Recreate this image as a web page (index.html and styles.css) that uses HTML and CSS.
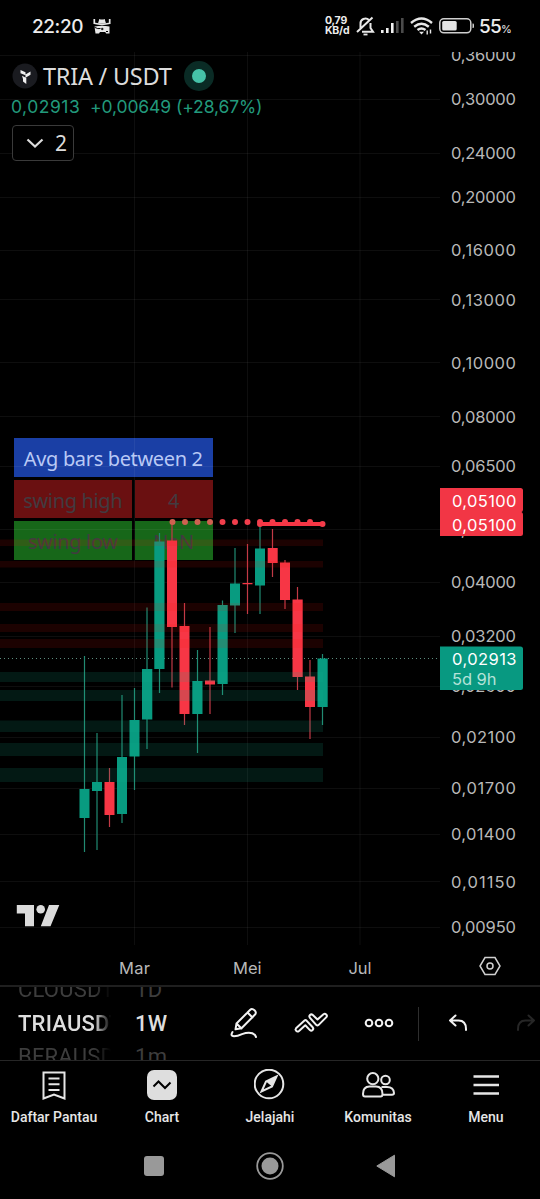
FILE: index.html
```html
<!DOCTYPE html>
<html lang="id">
<head>
    <meta charset="UTF-8">
    <title>TRIA / USDT</title>
    <link rel="stylesheet" href="styles.css">
</head>
<body>
    <header class="status">
        <span class="clock">22:20</span>
        <svg class="agent" width="18" height="17" viewBox="0 0 18 17">
            <path d="M5 5.500L6.300 1q2.700 1.200 5.400 0L13 5.500z" fill="#e8e8e8"/>
            <path d="M1.300 1v4.300q7.700 2 15.400 0V1" fill="none" stroke="#e8e8e8" stroke-width="1.700"/>
            <path d="M1.500 8.500q7.500-1.600 15 0v7h-3.300l-1-1.500H7l-1 1.500H2.500z" fill="#e8e8e8"/>
            <path d="M1.500 9.300q3.500 2 6 1.200M8 11h2.500M9.200 9.800v2.400M13 13.500h2" fill="none" stroke="#000" stroke-width="1"/>
        </svg>
        <span class="speed"><b>0,79</b><b>KB/d</b></span>
        <svg class="bell" width="19" height="20" viewBox="0 0 19 20" fill="none" stroke="#e8e8e8" stroke-width="2">
            <path d="M4.500 12V8a5 5 0 0 1 8.500-4M14.500 7v5l2.500 3.700H6M1 16L16.500 1.500"/>
            <path d="M7.500 18.500h4" stroke-width="1.800"/>
        </svg>
        <svg class="signal" width="23" height="16" viewBox="0 0 23 16">
            <path d="M0 12h2.600v3H0zM5 10h2.600v5H5zM10 5h2.600v10H10z" fill="#f0f0f0"/>
            <path d="M15 3h2.600v12H15zM20 0h2.600v15H20z" fill="#4b4b4b"/>
        </svg>
        <svg class="wifi" width="23" height="18" viewBox="0 0 23 18" fill="none" stroke="#e8e8e8" stroke-width="2.400">
            <path d="M1 6q10.500-9 21 0M4.200 9.700q7.300-6 14.600 0M7.500 13q4-3.200 8 0"/>
            <path d="M9 14.800h5L11.500 17.500z" fill="#e8e8e8" stroke="none"/>
            <path d="M17.200 13.500v4M20.500 12.500v4" stroke-width="1.400"/>
        </svg>
        <svg class="battery" width="36" height="16" viewBox="0 0 36 16">
            <rect x=".8" y=".8" width="31" height="14" rx="4" fill="none" stroke="#cfcfcf" stroke-width="1.500"/>
            <rect x="3.200" y="3" width="14.500" height="9.600" rx="1.500" fill="#e4e4e4"/>
            <path d="M33.500 5.500h.5q1 0 1 1v2.500q0 1-1 1h-.5z" fill="#cfcfcf"/>
        </svg>
        <span class="percent">55<small>%</small></span>
    </header>

    <main class="chart">
        <div class="legend">
            <div class="pair">
                <svg width="26" height="26" viewBox="0 0 26 26">
                    <circle cx="13" cy="13" r="12.500" fill="#1a1b20"/>
                    <path d="M8.500 7l5 2.300v3L8.500 10.200zM13.500 11.500l5-3v3.200l-5 3zM10 12.800l4.300 2.200v6L11 18.500v-2.500z" fill="#f1f1f1"/>
                </svg>
                <h1 class="symbol">TRIA / USDT</h1>
                <span class="market"></span>
            </div>
            <div class="quote"><span class="price">0,02913</span><span class="change">+0,00649 (+28,67%)</span></div>
            <button class="collapse">
                <svg width="18" height="11" viewBox="0 0 18 11"><path d="M1.500 1.500L9 8.500l7.500-7" fill="none" stroke="#dcdcdc" stroke-width="2.200"/></svg>
                <span>2</span>
            </button>
        </div>

        <div class="swing">
            <div class="avg">Avg bars between 2</div>
            <div class="high">swing high</div>
            <div class="high">4</div>
            <div class="low">swing low</div>
            <div class="low">NaN</div>
        </div>

        <svg class="plot" width="540" height="933" viewBox="0 52 540 933">
            <!-- grid -->
            <path class="grid" d="M0 55.500H440M0 99.500H440M0 153.500H440M0 197.500H440M0 250.500H440M0 299.500H440M0 362.500H440M0 416.500H440M0 466.500H440M0 529.500H440M0 582.500H440M0 636.500H440M0 686.500H440M0 737.500H440M0 788.500H440M0 834.500H440M0 881.500H440M0 927.500H440M134.500 52V945M247.500 52V945M360 52V945"/>

            <!-- price line -->
            <path class="last" d="M0 658.500H440"/>

            <!-- candles -->
            <path class="wick up" d="M84.500 656V852M97 733V850M122 695V823M134.500 688V790M147 607.500V749M159.500 533V693M197.500 650V753M222.500 600.500V695M235 548V633M260 524V614M322.500 654V725"/>
            <path class="wick down" d="M109.500 768V827M172 522V687.500M184.500 603V725M210 627V714M247.500 544V614M272.500 529V577M285 560V609M297.500 587V690M310 660V739"/>
            <path class="body-up" d="M79.500 789h10v29h-10zM92 782h10v9h-10zM117 757h10v57h-10zM129.500 720h10v36.500h-10zM142 669h10.300v50.500H142zM154.300 541.500h10.200V669h-10.200zM192.300 681h10.200v33h-10.200zM217.500 605h10.200v79h-10.200zM230 583.500h10v22h-10zM255 548.500h10v37h-10zM317.500 658.500h10.200V707h-10.200z"/>
            <path class="body-down" d="M104.500 782h10v33h-10zM167 540.500h10V627h-10zM179.500 626h10v88h-10zM205 680.500h10v4h-10zM242.500 583h10v1.200h-10zM267.700 548h10v15h-10zM280 562.500h10V600h-10zM292.500 599.500h10.200V677h-10.200zM305 676.500h10V707h-10z"/>

            <!-- zones -->
            <path class="supply" d="M0 539.500H323v6.500H0zM0 561H323v6.500H0zM0 603H323v8H0zM0 624H323v8H0zM0 639H323v9H0z"/>
            <path class="demand" d="M0 672H323v10H0zM0 690H323v11H0zM0 720.500H323V732H0zM0 743H323v13H0zM0 768H323v14H0z"/>

            <!-- swing high level -->
            <path class="dots muted" d="M172.500 522h0M185 522h0M197.500 522h0M210 522h0"/>
            <path class="dots" d="M222.500 522h0M235 522h0M247.500 522h0M260 522h0M272.500 522h0M285 522h0M297.500 522h0M310 522h0M260 524h0M322.500 524h0"/>
            <path class="level" d="M260 524H322.500"/>

            <!-- price scale -->
            <g class="scale">
                <text x="451" y="61" textLength="65">0,36000</text>
                <text x="451" y="105" textLength="65">0,30000</text>
                <text x="451" y="158.500" textLength="65">0,24000</text>
                <text x="451" y="202.500" textLength="65">0,20000</text>
                <text x="451" y="256" textLength="65">0,16000</text>
                <text x="451" y="305.500" textLength="65">0,13000</text>
                <text x="451" y="368.500" textLength="65">0,10000</text>
                <text x="451" y="422.500" textLength="65">0,08000</text>
                <text x="451" y="472" textLength="65">0,06500</text>
                <text x="451" y="534.500" textLength="65">0,05000</text>
                <text x="451" y="588" textLength="65">0,04000</text>
                <text x="451" y="642" textLength="65">0,03200</text>
                <text x="451" y="692" textLength="65">0,02600</text>
                <text x="451" y="743" textLength="65">0,02100</text>
                <text x="451" y="794" textLength="65">0,01700</text>
                <text x="451" y="840" textLength="65">0,01400</text>
                <text x="451" y="887.500" textLength="65">0,01150</text>
                <text x="451" y="933" textLength="65">0,00950</text>
            </g>
            <path class="tag-red" d="M440 488h80.500q2.500 0 2.500 2.500v19q0 2-1.500 2.500q1.500.5 1.500 2.500v19q0 2.500-2.500 2.500H440z"/>
            <path class="tag-green" d="M440 646.500h80.500q2.500 0 2.500 2.500v38.500q0 2.500-2.500 2.500H440z"/>
            <g class="scale tag">
                <text x="452" y="506.500" textLength="64.500">0,05100</text>
                <text x="452" y="530.500" textLength="64.500">0,05100</text>
                <text x="452" y="665" textLength="64.500">0,02913</text>
                <text class="countdown" x="452" y="684.500" textLength="44.500">5d 9h</text>
            </g>

            <!-- time scale -->
            <g class="scale">
                <text x="119" y="973.500" textLength="31">Mar</text>
                <text x="233" y="973.500" textLength="28.500">Mei</text>
                <text x="348.500" y="973.500" textLength="23">Jul</text>
            </g>
            <path class="hex" d="M485 957.500h10l5 8.500-5 8.500h-10l-5-8.500z"/>
            <circle class="hex" cx="490" cy="966" r="3"/>

            <!-- logo -->
            <path class="logo" d="M16.800 905h17.200v21.200h-9V913.500h-8.200zM49 905h10.300l-8.800 21.200H40.800z"/>
            <circle class="logo" cx="40.700" cy="909.200" r="4.300"/>
        </svg>
    </main>

    <section class="toolbar">
        <div class="wheel ticker"><span>CLOUSDT</span><b>TRIAUSDT</b><span>BERAUSDT</span></div>
        <div class="wheel interval"><span>1D</span><b>1W</b><span>1m</span></div>
        <svg width="30" height="34" viewBox="0 0 30 34">
            <path d="M6.500 17.500L20 4q2-2 4.500.3t.3 4.500L11.500 22.300l-6 1zM17.500 6.500l5 5M6.500 17.500l5 5"/>
            <path d="M2.500 26q-2.500 4 1.500 4.300 3.500 0 8-2.200 9-3 13 .9l1 2"/>
        </svg>
        <svg width="36" height="22" viewBox="0 0 36 22">
            <path d="M3 16.300L11.500 8.600q1-.9 2 0l6.200 6.700q1.200 1.400-.1 2.700t-2.700.1L12.300 13.300 6 19q-1.500 1.200-2.800-.1t-.2-2.600z"/>
            <path d="M17 3q1.300-1.300 2.800 0L24.500 7.500l6-5.300q1.400-1 2.700.2t.2 2.700l-8 8q-1 .9-2 0L17 5.800q-1.300-1.500 0-2.800z"/>
        </svg>
        <svg width="30" height="10" viewBox="0 0 30 10">
            <circle cx="5" cy="5" r="3.300"/><circle cx="15" cy="5" r="3.300"/><circle cx="25" cy="5" r="3.300"/>
        </svg>
        <i class="divider"></i>
        <svg width="20" height="18" viewBox="0 0 20 18"><path d="M7.500 1.500L2 6.500l5.500 5M2 6.500h8.500q7.500 0 7.500 8.500v1"/></svg>
        <svg class="off" width="20" height="18" viewBox="0 0 20 18"><path d="M12.500 1.500L18 6.500l-5.500 5M18 6.500H9.500Q2 6.500 2 15v1"/></svg>
    </section>

    <nav class="tabs">
        <a class="tab">
            <svg width="32" height="32" viewBox="0 0 32 32"><path d="M5.500 3.500h21v26L16 25.500 5.500 29.500zM10.500 9.500h11M10.500 15.300h11M10.500 21h11"/></svg>
            Daftar Pantau
        </a>
        <a class="tab">
            <svg width="32" height="32" viewBox="0 0 32 32"><rect x="1" y="1" width="30" height="30" rx="7" fill="#dedede" stroke="none"/><path d="M7.500 17.500l5-5 6.500 6.500 5.500-5.500" stroke="#000"/></svg>
            Chart
        </a>
        <a class="tab">
            <svg width="32" height="32" viewBox="0 0 32 32"><circle cx="15" cy="15" r="14.300"/><path d="M22.500 7.500L12 12.500 7.500 22.500 18 17.500z"/><path d="M22.500 7.500L12 12.500l6 5z" fill="#e6e6e6" stroke="none"/></svg>
            Jelajahi
        </a>
        <a class="tab">
            <svg width="34" height="32" viewBox="0 0 34 32">
                <circle cx="11.800" cy="9.700" r="5.600"/><circle cx="24.500" cy="11" r="4.300"/>
                <path d="M2 25q0-7.500 6.500-7.500h6.500q6.500 0 6.500 7.500 0 2.500-2 2.500H4q-2 0-2-2.500zM20.500 18h5.500q6.500 0 7 6 0 1.800-2 1.800h-9"/>
            </svg>
            Komunitas
        </a>
        <a class="tab">
            <svg width="32" height="32" viewBox="0 0 32 32"><path d="M3.500 7.500h25.500M3.500 16h25.500M3.500 24.500h25.500" stroke-width="2.600"/></svg>
            Menu
        </a>
    </nav>

    <footer class="system">
        <svg width="20" height="20"><rect width="20" height="20" rx="3" fill="#999"/></svg>
        <svg width="28" height="28"><circle cx="14" cy="14" r="12.800" fill="none" stroke="#999" stroke-width="1.800"/><circle cx="14" cy="14" r="8.500" fill="#999"/></svg>
        <svg width="20" height="24"><path d="M.800 12L18.500 1.200v21.600z" fill="#999" stroke="#999" stroke-linejoin="round"/></svg>
    </footer>
</body>
</html>
```
FILE: styles.css
```css
* {
    box-sizing: border-box;
}
body {
    margin: 0;
    width: 540px;
    height: 1199px;
    overflow: hidden;
    background: #000;
    color: #dcdcdc;
    font-family: Inter, "Liberation Sans", sans-serif;
}
svg {
    display: block;
    flex: none;
}

/* status bar */
.status {
    display: flex;
    align-items: center;
    height: 52px;
    padding: 0 0 0 32px;
    color: #ededed;
}
.clock {
    width: 61px;
    font-size: 19px;
    font-weight: 500;
    letter-spacing: -0.4px;
}
.speed {
    display: flex;
    flex-direction: column;
    width: 31px;
    margin-left: 214px;
    font-size: 10.5px;
    line-height: 10px;
    letter-spacing: -0.2px;
}
.signal {
    margin-left: 6px;
}
.wifi {
    margin-left: 6px;
}
.battery {
    margin-left: 6px;
}
.percent {
    margin-left: 4px;
    font-size: 19px;
    font-weight: 500;
    letter-spacing: -0.8px;
    white-space: nowrap;
}
.percent small {
    font-size: 11px;
    font-weight: 400;
}

/* chart */
.chart {
    position: relative;
    height: 933px;
}
.legend {
    position: absolute;
    top: 8px;
    left: 12px;
    z-index: 2;
}
.pair {
    display: flex;
    align-items: center;
    height: 32px;
}
.symbol {
    width: 129px;
    margin: 0 12px 0 5px;
    font-family: "Noto Sans", sans-serif;
    font-size: 23.5px;
    font-weight: 400;
    line-height: 30px;
    letter-spacing: -0.25px;
    white-space: nowrap;
}
.market {
    width: 30px;
    height: 30px;
    border: 8px solid #0a2b25;
    border-radius: 50%;
    background: #46c2a8;
}
.quote {
    display: flex;
    height: 33px;
    margin-left: -1px;
    color: #229a7c;
    font-size: 17.5px;
    line-height: 30px;
    white-space: nowrap;
}
.price {
    width: 79px;
    letter-spacing: 0.5px;
}
.change {
    letter-spacing: -0.1px;
}
.collapse {
    display: flex;
    align-items: center;
    justify-content: space-between;
    width: 62px;
    height: 36px;
    padding: 0 6px 0 13px;
    border: 1px solid #3a3a3a;
    border-radius: 4px;
    background: #000;
    color: #dcdcdc;
    font-family: "Noto Sans", sans-serif;
    font-size: 21px;
    line-height: 30px;
}
.swing {
    position: absolute;
    top: 386px;
    left: 14px;
    display: grid;
    grid-template-columns: 117.5px 78px;
    grid-auto-rows: 38.5px;
    gap: 3px;
    color: #423b40;
    font-family: "Noto Sans", sans-serif;
    font-size: 20px;
    line-height: 41px;
    letter-spacing: -0.35px;
    text-align: center;
    white-space: nowrap;
}
.avg {
    grid-column: 1 / 3;
    background: #1a3fa5;
    color: #b9c9f5;
}
.high {
    background: #6a1011;
}
.low {
    background: #176719;
}
.plot {
    position: relative;
    z-index: 1;
}
.grid {
    stroke: #fff;
    stroke-opacity: 0.055;
}
.last {
    stroke: #5d8c7e;
    stroke-dasharray: 1 3;
}
.wick {
    stroke-width: 1.2;
}
.up {
    stroke: #218a72;
}
.down {
    stroke: #c23a46;
}
.body-up {
    fill: #089b80;
}
.body-down {
    fill: #f73645;
}
.supply {
    fill: rgba(255, 20, 10, 0.11);
}
.demand {
    fill: rgba(20, 180, 140, 0.14);
}
.dots {
    stroke: #f23e4c;
    stroke-width: 6;
    stroke-linecap: round;
}
.muted {
    stroke: #cf6150;
}
.level {
    stroke: #f73645;
    stroke-width: 4;
}
.scale {
    fill: #b8b8b8;
    font-size: 16.5px;
}
.tag {
    fill: #fff;
}
.countdown {
    fill: #b5e2d8;
}
.tag-red {
    fill: #f23645;
}
.tag-green {
    fill: #089981;
}
.hex {
    fill: none;
    stroke: #d0d0d0;
    stroke-width: 1.5;
}
.logo {
    fill: #dbdbdb;
}

/* toolbar */
.toolbar {
    display: grid;
    grid-template-columns: 118px 93px 67px 66px 69px 11px 68px 68px;
    align-items: center;
    justify-items: center;
    height: 76px;
    overflow: hidden;
    border-top: 2px solid #1f1f1f;
    border-bottom: 1px solid #262626;
    font-family: Roboto, sans-serif;
}
.toolbar svg {
    margin-bottom: 2px;
    fill: none;
    stroke: #f2f2f2;
    stroke-width: 2;
    stroke-linejoin: round;
    stroke-linecap: round;
}
.toolbar .off {
    stroke: #262626;
}
.wheel {
    display: flex;
    flex-direction: column;
    justify-content: center;
    justify-self: start;
    height: 73px;
    overflow: hidden;
    font-size: 22px;
    line-height: 33.5px;
}
.wheel span {
    flex: none;
    color: #3d3d3d;
}
.wheel b {
    flex: none;
    color: #dedede;
    font-weight: 500;
}
.ticker {
    width: 93px;
    margin-left: 18px;
    letter-spacing: 0.2px;
    -webkit-mask-image: linear-gradient(to right, #000 82%, transparent);
    mask-image: linear-gradient(to right, #000 82%, transparent);
}
.interval {
    margin-left: 17px;
    letter-spacing: 0.3px;
}
.divider {
    width: 1px;
    height: 34px;
    background: #2e2e2e;
}

/* bottom navigation */
.tabs {
    display: grid;
    grid-template-columns: repeat(5, 108px);
    height: 72px;
    padding-top: 8px;
}
.tab {
    display: flex;
    flex-direction: column;
    align-items: center;
    gap: 8px;
    color: #e6e6e6;
    font-family: Roboto, sans-serif;
    font-size: 14px;
    font-weight: 500;
    line-height: 16px;
}
.tab svg {
    fill: none;
    stroke: #e6e6e6;
    stroke-width: 2;
}
.system {
    display: flex;
    align-items: center;
    justify-content: center;
    gap: 92px;
    height: 66px;
}
```
